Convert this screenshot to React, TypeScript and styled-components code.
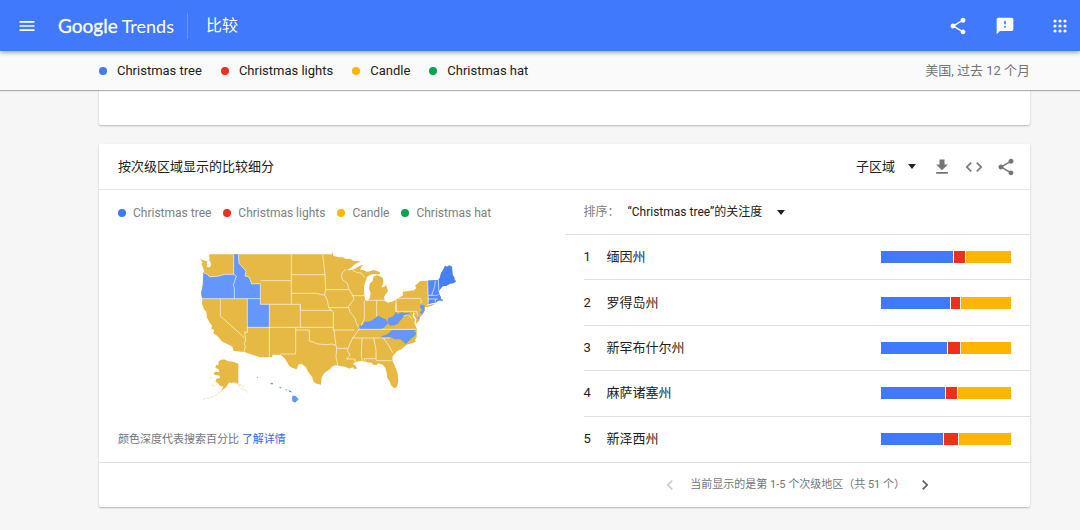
import React from 'react';
import styled, { createGlobalStyle } from 'styled-components';

const GlobalStyle = createGlobalStyle`
  * { box-sizing: border-box; }
  body {
    margin: 0;
    background: #f6f6f6;
    color: #212121;
    font-family: Roboto, "Noto Sans CJK SC", sans-serif;
    font-size: 13px;
    line-height: 20px;
  }
`;

const BLUE = '#4079fc';
const RED = '#ee2f1b';
const YELLOW = '#fdb600';
const GREEN = '#06a455';

const Header = styled.header`
  position: relative;
  z-index: 2;
  display: flex;
  align-items: center;
  height: 51px;
  padding: 0 8px 0 15px;
  background: ${BLUE};
  color: #fff;
  box-shadow: 0 1px 5px rgba(0, 0, 0, 0.45);
`;

const IconButton = styled.button`
  display: flex;
  align-items: center;
  justify-content: center;
  width: 24px;
  height: 24px;
  padding: 0;
  border: 0;
  background: none;
  color: inherit;
  cursor: pointer;
  &:disabled { color: #ccc; cursor: default; }
`;

const Brand = styled.a`
  display: flex;
  gap: 4px;
  margin-left: 19px;
  padding-right: 13px;
  border-right: 1px solid #6695fd;
  color: #fff;
  font-family: Lato, sans-serif;
  font-size: 19px;
  line-height: 26px;
  text-decoration: none;
`;

const BrandName = styled.span`
  -webkit-text-stroke: 0.3px currentColor;
`;

const BrandProduct = styled.span`
  font-size: 18px;
`;

const PageTitle = styled.h1`
  margin: 0 auto 0 18px;
  font-size: 16px;
  font-weight: 400;
`;

const HeaderTools = styled.div`
  display: flex;
  gap: 23px;
  & > :last-child { margin-left: 8px; }
`;

const TermsBar = styled.div`
  position: relative;
  z-index: 1;
  display: flex;
  align-items: center;
  justify-content: space-between;
  height: 39px;
  padding: 0 50px 0 99px;
  background: #fafafa;
  box-shadow: 0 1px 1px rgba(0, 0, 0, 0.3);
`;

const Scope = styled.span`
  color: #757575;
`;

const Legend = styled.ul<{ $small?: boolean }>`
  display: flex;
  gap: ${(p) => (p.$small ? 12 : 19)}px;
  margin: 0;
  padding: 0;
  list-style: none;
  font-size: ${(p) => (p.$small ? 12 : 13)}px;
  color: ${(p) => (p.$small ? '#808080' : '#212121')};
`;

const Term = styled.li<{ $color: string; $gap: number }>`
  display: flex;
  align-items: center;
  gap: ${(p) => p.$gap}px;
  &::before {
    content: '';
    width: 8px;
    height: 8px;
    border-radius: 50%;
    background: ${(p) => p.$color};
  }
`;

const Main = styled.main`
  display: flex;
  flex-direction: column;
  gap: 19px;
  padding: 0 50px 23px 99px;
`;

const Card = styled.section`
  min-height: 35px;
  background: #fff;
  border-radius: 0 0 2px 2px;
  box-shadow: 0 1px 2px rgba(0, 0, 0, 0.25);
`;

const CardHeader = styled.div`
  display: flex;
  align-items: center;
  height: 46px;
  padding: 0 12px 0 19px;
  border-bottom: 1px solid #e6e6e6;
`;

const CardTitle = styled.h2`
  margin: 0 auto 0 0;
  font-size: 13px;
  font-weight: 400;
`;

const CardTools = styled.div`
  display: flex;
  gap: 8px;
  margin-left: 14px;
  color: #757575;
`;

const SelectBox = styled.span`
  display: flex;
  align-items: center;
`;

const Select = styled.select<{ $width: number; $size: number }>`
  appearance: none;
  width: ${(p) => p.$width}px;
  padding: 0;
  border: 0;
  background: none;
  color: #212121;
  font: inherit;
  font-size: ${(p) => p.$size}px;
`;

const Caret = styled.span`
  border: 4px solid transparent;
  border-top: 5px solid #212121;
  border-bottom: 0;
`;

const Columns = styled.div`
  display: grid;
  grid-template-columns: 1fr 1fr;
`;

const MapPanel = styled.div`
  display: flex;
  flex-direction: column;
  padding: 13px 19px 12px;
`;

const MapDrawing = styled.svg`
  display: block;
  width: 280px;
  height: 170px;
  margin: 17px auto 0 72px;
`;

const Note = styled.p`
  margin: auto 0 0;
  color: #757575;
  font-size: 11px;
`;

const NoteLink = styled.a`
  color: #3367f0;
  text-decoration: none;
`;

const SortRow = styled.div`
  display: flex;
  align-items: center;
  gap: 8px;
  height: 45px;
  padding-left: 19px;
  border-bottom: 1px solid #e0e0e0;
`;

const SortLabel = styled.label`
  color: #808080;
  font-size: 12px;
`;

const Regions = styled.ol`
  display: grid;
  grid-auto-rows: 1fr;
  min-height: 227px;
  margin: 0;
  padding: 0 0 0 19px;
  list-style: none;
`;

const Region = styled.li`
  display: flex;
  align-items: center;
  padding-right: 19px;
  &:not(:last-child) { border-bottom: 1px solid #e0e0e0; }
`;

const Rank = styled.span`
  width: 23px;
`;

const RegionName = styled.span`
  flex: 1;
`;

const Bar = styled.span`
  display: flex;
  gap: 1px;
  width: 130px;
  height: 12px;
`;

const Segment = styled.span<{ $color: string }>`
  background: ${(p) => p.$color};
`;

const Pager = styled.nav`
  display: flex;
  align-items: center;
  justify-content: flex-end;
  gap: 8px;
  height: 45px;
  padding-right: 93px;
  border-top: 1px solid #e0e0e0;
  color: #616161;
`;

const PagerText = styled.span`
  color: #757575;
  font-size: 11px;
`;

const Icon = ({ d, size = 20 }: { d: string; size?: number }) => (
  <svg width={size} height={size} viewBox="0 0 24 24" fill="currentColor" aria-hidden="true">
    <path d={d} />
  </svg>
);

const icons = {
  menu: 'M3 18h18v-2H3v2zm0-5h18v-2H3v2zm0-7v2h18V6H3z',
  share:
    'M18 16.08c-.76 0-1.44.3-1.96.77L8.91 12.7c.05-.23.09-.46.09-.7s-.04-.47-.09-.7l7.05-4.11c.54.5 1.25.81 2.04.81 1.66 0 3-1.34 3-3s-1.34-3-3-3-3 1.34-3 3c0 .24.04.47.09.7L8.04 9.81C7.5 9.31 6.79 9 6 9c-1.66 0-3 1.34-3 3s1.34 3 3 3c.79 0 1.5-.31 2.04-.81l7.12 4.16c-.05.21-.08.43-.08.65 0 1.61 1.31 2.92 2.92 2.92s2.92-1.31 2.92-2.92-1.31-2.92-2.92-2.92z',
  feedback:
    'M20 2H4c-1.1 0-1.99.9-1.99 2L2 22l4-4h14c1.1 0 2-.9 2-2V4c0-1.1-.9-2-2-2zm-7 12h-2v-2h2v2zm0-4h-2V6h2v4z',
  download: 'M19 9h-4V3H9v6H5l7 7 7-7zM5 18v2h14v-2H5z',
  code: 'M9.4 16.6L4.8 12l4.6-4.6L8 6l-6 6 6 6 1.4-1.4zm5.2 0l4.6-4.6-4.6-4.6L16 6l6 6-6 6-1.4-1.4z',
  left: 'M15.41 7.41L14 6l-6 6 6 6 1.41-1.41L10.83 12z',
  right: 'M10 6L8.59 7.41 13.17 12l-4.58 4.59L10 18l6-6z',
};

const AppsIcon = () => (
  <svg width="14" height="14" viewBox="0 0 14 14" fill="currentColor" aria-hidden="true">
    {[2, 7, 12].map((y) => [2, 7, 12].map((x) => <circle key={`${x}-${y}`} cx={x} cy={y} r="1.6" />))}
  </svg>
);

const terms = [
  { name: 'Christmas tree', color: BLUE },
  { name: 'Christmas lights', color: RED },
  { name: 'Candle', color: YELLOW },
  { name: 'Christmas hat', color: GREEN },
];

const regions = [
  { name: '缅因州', shares: [72, 11, 45] },
  { name: '罗得岛州', shares: [69, 9, 50] },
  { name: '新罕布什尔州', shares: [66, 12, 50] },
  { name: '麻萨诸塞州', shares: [64, 11, 53] },
  { name: '新泽西州', shares: [62, 14, 52] },
];

const TermLegend = ({ small = false }: { small?: boolean }) => (
  <Legend $small={small}>
    {terms.map((t) => (
      <Term key={t.name} $color={t.color} $gap={small ? 7 : 10}>
        {t.name}
      </Term>
    ))}
  </Legend>
);

const mainland =
  'M30 57L40 61 52 64 49 71 53 74 49 79 58 83 63 76 61 65 57 60 60 53 56 48 60 43H420L425 44V38L428 39 430 47 445 52 458 52 468 57 480 56 492 63 513 64 495 73 483 83 470 91 485 90 497 85 510 77 520 75 514 82 510 89 520 90 530 95 540 94 550 90 560 93 569 96 570 103 550 102 542 104 533 109 525 118 531 113 527 123 523 134 522 145 523 165 525 180 532 182 539 175 542 160 537 144 540 130 548 123 550 110 560 106 570 109 579 114 580 130 574 141 580 142 587 136 592 144 593 155 586 164 582 171 584 183 595 188 612 183 625 174 639 166 638 155 660 152 672 151 679 145 675 137 690 124 713 122 745 120 749 114 753 100 761 86 765 77 771 80 778 76 786 80 788 105 793 112 794 120 799 124 790 130 780 131 770 137 758 139 751 146 747 156 746 163 752 170 753 178 760 179 757 183 748 182 742 181 739 187 716 191 708 197 704 203 705 211 697 224 690 232 688 242 680 249 677 258 681 268 680 275 680 284 680 292 675 300 678 305 665 310 650 314 635 327 622 333 608 348 607 362 614 376 623 400 625 422 621 441 613 445 604 437 598 422 592 414 590 398 586 384 578 374 566 370 559 375 549 374 545 368 530 367 518 364 507 364 497 366 489 371 497 377 502 385 494 388 489 382 478 386 465 380 450 378 438 376 428 378 420 388 404 398 395 412 393 434 376 430 370 424 366 410 355 397 347 380 336 373 326 373 320 388 306 383 297 377 291 365 283 354 272 344H247V352H210L163 336 131 333 127 320 112 312 98 306 82 288 70 280 72 270 64 266 66 257 60 249 51 233 49 215 42 208 36 192 37 176 33 160 38 138 41 115 39 98 43 94 38 80 34 71 38 68Z';

const stateLines =
  'M40 98L53 103 58 110 82 109 105 103H131V43M131 103L139 108 130 135 133 143V176M36 176H211M145 43L147 70 163 88 168 94 165 108 175 110 180 118 185 132 211 131V193M211 122H304M304 43V193M172 176V277L164 276 167 300 163 311 166 320 162 335M91 176V228L163 293M211 193H331V262M238 193V352M172 262H430M317 262V342H272M317 270H358V303L369 306 380 311 394 313 410 314 425 312 438 316M304 104H405M304 160H380L395 164 405 165M331 193V211H425M398 43L402 80 405 104 407 150 404 165 411 178 417 205 430 216V270H493M408 149H475M468 88L455 100 456 118 472 130 477 149 488 165 492 178 475 200 480 216 495 235 500 252 508 265M485 167H523M488 91L500 97 515 100 524 112M417 203H475M523 181V235L514 257M560 181V230M528 181H587M618 175V214M618 175H690L694 181 693 190 699 196M618 214H680L684 230M713 122L715 190M504 268H680M487 294H600M432 270L438 316 440 325H472M440 325L438 350 443 376M508 265L500 278 487 296 478 315 472 332 480 345 470 357H495V366M516 294L514 345 517 365M551 294L558 330V356H523L526 366M558 356L560 362H605M580 294L595 315 608 338M618 190V216M640 228L655 224 665 236';

const blueStates =
  'M40 98L53 103 58 110 82 109 105 103H131V43H145L147 70 163 88 168 94 165 108 175 110 180 118 185 132 211 131V193H238V262H172V176H37L33 160 38 138Z ' +
  'M503 268L508 258 519 254 523 246 541 244 556 234 564 227 579 235 588 238 594 250 583 262 575 267Z ' +
  'M593 250L594 234 608 230 618 216 623 223 634 217 645 219 660 218 655 227 645 225 637 235 630 243 624 251 614 256 601 257Z ' +
  'M568 293L580 287 592 283 606 270H678L672 275 679 278 676 286 670 291 662 297 648 312 631 298 614 298 602 292Z ' +
  'M693 189L703 196 704 211 697 223 689 218 696 210 690 202Z M682 223L688 235 683 236Z ' +
  'M713 122L745 120 747 156 746 163 752 170 753 178 760 179 757 183 742 181 739 187 716 191Z';

const maine =
  'M745 120L749 114 753 100 761 86 765 77 771 80 778 76 786 80 788 105 793 112 794 120 799 124 790 130 780 131 770 137 758 139 747 152Z';

const alaska =
  'M85 365L92 360 102 358 115 364 130 365 145 371V432L132 427 124 430 118 427 108 442 98 450 92 455 100 440 90 437 84 430 76 424 80 416 90 414 89 407 75 405 70 400 77 395 88 397 86 388 76 383 78 376 86 374Z';

const hawaii =
  'M308 467L316 467 326 478 315 488 307 484 306 475Z M241 429L248 428 249 433 242 433Z M268 440L273 442 275 445 269 445Z M285 447L292 449 290 452Z M295 451L303 453 306 457 298 456Z M201 411H204V413H201Z';

const UsMap = () => (
  <MapDrawing viewBox="0 0 840 510" role="img" aria-label="美国">
    <g fill="#e6b945" strokeLinejoin="round">
      <path d={mainland} />
      <path d={alaska} />
      <path d="M702 199L718 194 736 191 724 198 708 202Z" />
    </g>
    <path d={blueStates} fill="#6496fb" />
    <path d="M713 122L745 120 747 156 753 178 739 187 716 191Z" fill="#5188fb" />
    <path d={maine} fill="#4580fb" />
    <path d={hawaii} fill="#6496fb" />
    <path d="M672 218L670 228 677 238 675 248 681 262" fill="none" stroke="#fff" strokeWidth="4" />
    <g fill="none" stroke="#fff" strokeOpacity="0.62" strokeWidth="3">
      <path d={stateLines} />
      <path d="M736 122L734 140 725 165M715 166H742L746 162M713 177H743M736 177V187M745 120L747 156" />
    </g>
    <g fill="none" stroke="#f3dfae" strokeWidth="3" strokeDasharray="9 4">
      <path d="M92 455L78 466 60 473 40 477M60 411L65 415M67 435L74 438" />
      <path d="M145 433L158 437 166 450 174 460M132 429L146 436 160 452" />
    </g>
  </MapDrawing>
);

export default function App() {
  return (
    <>
      <GlobalStyle />
      <Header>
        <IconButton aria-label="菜单"><Icon d={icons.menu} /></IconButton>
        <Brand href="#">
          <BrandName>Google</BrandName>
          <BrandProduct>Trends</BrandProduct>
        </Brand>
        <PageTitle>比较</PageTitle>
        <HeaderTools>
          <IconButton aria-label="分享"><Icon d={icons.share} /></IconButton>
          <IconButton aria-label="反馈"><Icon d={icons.feedback} /></IconButton>
          <IconButton aria-label="应用"><AppsIcon /></IconButton>
        </HeaderTools>
      </Header>
      <TermsBar>
        <TermLegend />
        <Scope>美国, 过去 12 个月</Scope>
      </TermsBar>
      <Main>
        <Card />
        <Card>
          <CardHeader>
            <CardTitle>按次级区域显示的比较细分</CardTitle>
            <SelectBox>
              <Select $width={52} $size={13} aria-label="区域级别"><option>子区域</option></Select>
              <Caret />
            </SelectBox>
            <CardTools>
              <IconButton aria-label="下载"><Icon d={icons.download} /></IconButton>
              <IconButton aria-label="嵌入"><Icon d={icons.code} /></IconButton>
              <IconButton aria-label="分享"><Icon d={icons.share} /></IconButton>
            </CardTools>
          </CardHeader>
          <Columns>
            <MapPanel>
              <TermLegend small />
              <UsMap />
              <Note>
                颜色深度代表搜索百分比 <NoteLink href="#">了解详情</NoteLink>
              </Note>
            </MapPanel>
            <div>
              <SortRow>
                <SortLabel htmlFor="sort">排序：</SortLabel>
                <SelectBox>
                  <Select id="sort" $width={149} $size={12}><option>“Christmas tree”的关注度</option></Select>
                  <Caret />
                </SelectBox>
              </SortRow>
              <Regions>
                {regions.map((r, i) => (
                  <Region key={r.name}>
                    <Rank>{i + 1}</Rank>
                    <RegionName>{r.name}</RegionName>
                    <Bar>
                      {r.shares.map((s, j) => (
                        <Segment key={j} $color={terms[j].color} style={{ flexGrow: s }} />
                      ))}
                    </Bar>
                  </Region>
                ))}
              </Regions>
            </div>
          </Columns>
          <Pager>
            <IconButton aria-label="上一页" disabled><Icon d={icons.left} /></IconButton>
            <PagerText>当前显示的是第 1-5 个次级地区（共 51 个）</PagerText>
            <IconButton aria-label="下一页"><Icon d={icons.right} /></IconButton>
          </Pager>
        </Card>
      </Main>
    </>
  );
}
